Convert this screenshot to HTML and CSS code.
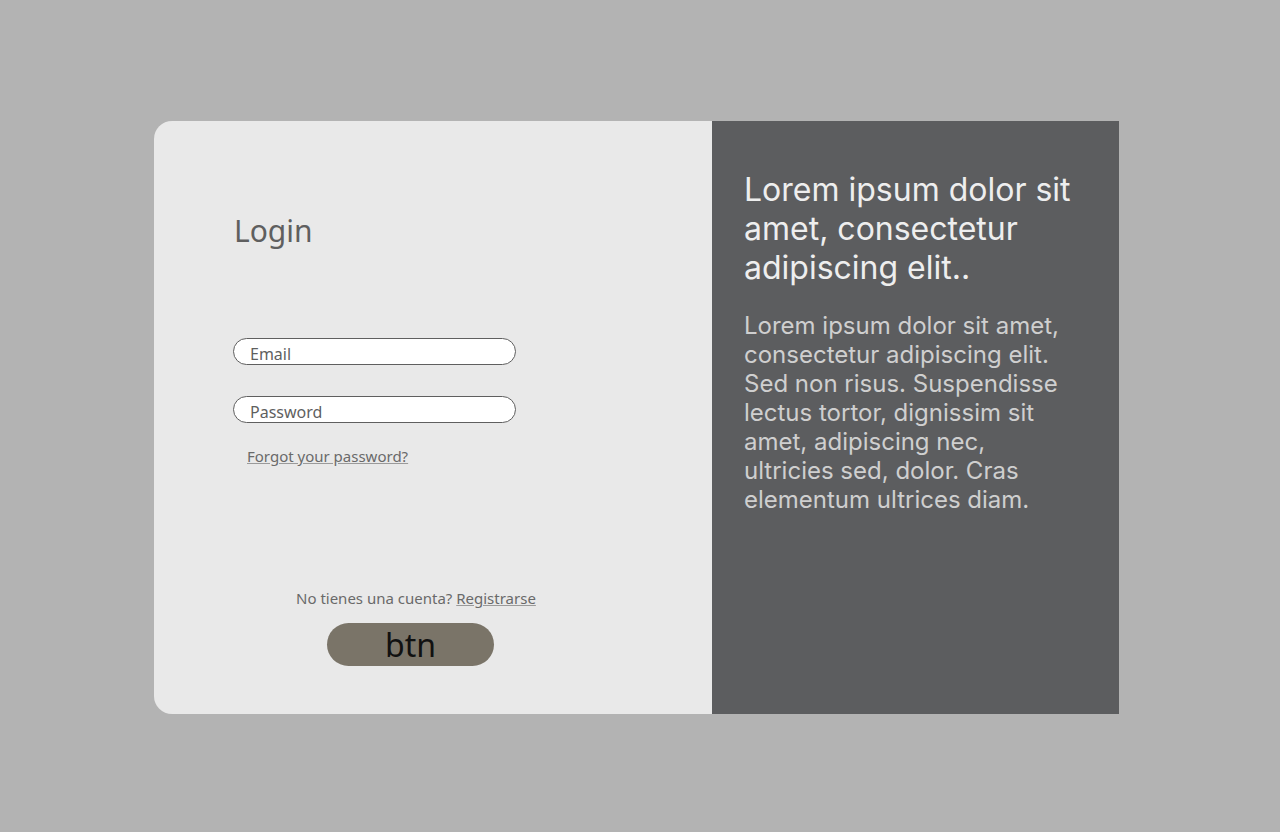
FILE: index.html
```html
<!DOCTYPE html>
<html lang="es">
<head>
<meta charset="utf-8">
<title>Login</title>
<link rel="stylesheet" href="styles.css">
</head>
<body>
<main class="card">
  <section class="login">
    <h1 class="login-title">Login</h1>
    <form class="form">
      <label class="field"><input type="email" placeholder="Email"></label>
      <label class="field"><input type="password" placeholder="Password"></label>
      <a class="forgot" href="#">Forgot your password?</a>
    </form>
    <div class="signup">
      <p class="signup-text">No tienes una cuenta? <a href="#">Registrarse</a></p>
      <button class="btn" type="button">btn</button>
    </div>
  </section>
  <aside class="info">
    <h2 class="info-title">Lorem ipsum dolor sit amet, consectetur adipiscing elit..</h2>
    <p class="info-text">Lorem ipsum dolor sit amet, consectetur adipiscing elit. Sed non risus. Suspendisse lectus tortor, dignissim sit amet, adipiscing nec, ultricies sed, dolor. Cras elementum ultrices diam.</p>
  </aside>
</main>
</body>
</html>
```
FILE: styles.css
```css
* { box-sizing: border-box; }
html, body { margin: 0; height: 100%; }
body {
  background: #b3b3b3;
  font-family: "Noto Sans", "Open Sans", sans-serif;
  padding: 121px 0 0 154px;
}
.card {
  display: flex;
  width: 965px;
  height: 593px;
}
.login {
  width: 558px;
  background: #e9e9e9;
  border-radius: 18px 0 0 18px;
  padding: 0 0 0 79px;
  display: flex;
  flex-direction: column;
}
.login-title {
  margin: 86px 0 0 1px;
  font-size: 30px;
  font-weight: 400;
  line-height: 48px;
  color: #5f5f5f;
}
.form {
  display: flex;
  flex-direction: column;
  margin-top: 83px;
  gap: 31px;
}
.field input {
  display: block;
  width: 283px;
  height: 27px;
  border: 1px solid #5f5f5f;
  border-radius: 14px;
  background: #fff;
  padding: 5px 16px 0;
  font-family: inherit;
  font-size: 16px;
  color: #5f5f5f;
}
.field input::placeholder { color: #5f5f5f; }
.forgot {
  margin: -8px 0 0 14px;
  font-size: 15px;
  color: #6a6a6a;
  text-decoration: underline;
  text-decoration-color: #9a9a9a;
  align-self: flex-start;
}
.signup {
  margin-top: 122px;
  display: flex;
  flex-direction: column;
  align-items: flex-start;
}
.signup-text {
  margin: 0 0 0 63px;
  font-size: 15px;
  color: #6a6a6a;
  line-height: 20px;
}
.signup-text a { color: #6a6a6a; text-decoration-color: #9a9a9a; }
.btn {
  margin: 15px 0 0 94px;
  width: 167px;
  height: 43px;
  border: 0;
  border-radius: 22px;
  background: #7a7468;
  font-family: inherit;
  font-size: 32px;
  line-height: 43px;
  color: #111;
  padding: 0;
}
.info {
  width: 407px;
  background: #5c5d5f;
  padding: 49px 45px 0 32px;
  font-family: Inter, sans-serif;
}
.info-title {
  margin: 0;
  font-size: 32px;
  font-weight: 400;
  line-height: 39px;
  color: #eeeeee;
}
.info-text {
  margin: 24px 0 0;
  font-size: 24px;
  line-height: 29px;
  color: #cfcfcf;
}
```
